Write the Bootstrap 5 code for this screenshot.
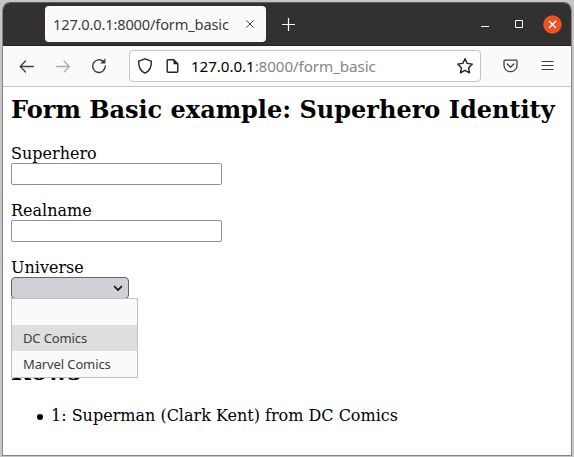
<!DOCTYPE html>
<html lang="en">
<head>
<meta charset="utf-8">
<meta name="viewport" content="width=device-width, initial-scale=1">
<title>Form Basic example</title>
<link href="https://cdn.jsdelivr.net/npm/bootstrap@5.3.0/dist/css/bootstrap.min.css" rel="stylesheet">
<style>
body { background: #c6c6c6; padding: 2px 2px 1px; height: 457px; overflow: hidden; }
.window { height: 454px; border: 1px solid #858585; border-top-color: #5d5b5c; border-radius: 8px 8px 0 0; background: #fff; font-family: "Noto Sans", sans-serif; overflow: hidden; }
.titlebar { height: 43px; background: #333031; border-bottom: 1px solid #222021; padding: 3px 9px 3px 42px; }
.tab-item { width: 221px; height: 36px; border-radius: 4px; background: #fafafa; color: #3d3d3d; padding: 0 12px 0 8px; font-size: 14.67px; }
.tab-label { letter-spacing: -.18px; }
.new-tab { margin-left: 16px; }
.win-min { margin-right: 24px; }
.win-max { margin-right: 19px; }
.toolbar { height: 41px; background: #fafafa; border-bottom: 1px solid #c5c5c5; padding: 0 17px 0 15px; }
.menu-icon { margin-left: 23px; }
.reload { margin-bottom: 2px; }
.address { width: 352px; height: 32px; margin-left: 22px; padding: 0 6px 0 7px; border: 1px solid #c3c3c3; border-radius: 4px; background: #fff; }
.page-icon { margin-left: 13px; }
.url { margin-left: 12px; font-size: 15.2px; letter-spacing: -.08px; color: #858585; }
.url span { color: #000; }
.page-body { padding: 9px 8px 0; font-family: "DejaVu Serif", serif; font-size: 16px; line-height: 19px; color: #000; }
.page-body h2 { font-size: 24px; line-height: 28px; font-weight: 700; white-space: nowrap; }
.page-body form { margin-top: 20px; height: 214px; }
.text-box { width: 211px; height: 22px; border: 1px solid #8f8f9d; border-radius: 2px; background: #fff; }
.field { margin-bottom: 16px; }
.choice { width: 118px; height: 22px; border: 1px solid #62626c; border-radius: 4px; background: #d0d0d7; padding: 0 5px 0 0; }
.options { top: 40px; left: 0; width: 127px; height: 80px; border: 1px solid #c0c0c0; background: #fafafa; font: 13px/26px "Noto Sans", sans-serif; letter-spacing: -.12px; color: #3d3d3d; }
.options div { height: 26px; padding-left: 11px; }
.options .current { background: #dedede; }
.hero-list { padding-left: 40px; margin-top: 20px; }
.hero-row::before { content: ""; width: 6px; height: 6px; border-radius: 50%; background: #000; margin: 2px 8px 0 -14px; }
</style>
</head>
<body>
<div class="window">
  <div class="titlebar d-flex align-items-start">
    <div class="tab-item d-flex align-items-center justify-content-between">
      <span class="tab-label text-nowrap">127.0.0.1:8000/form_basic</span>
      <svg width="8" height="8" viewBox="0 0 8 8" stroke="#444" fill="none"><path d="M.4 .4l7.200 7.200M7.600 .4L.4 7.600"/></svg>
    </div>
    <div class="d-flex align-items-center flex-grow-1 h-100">
      <svg class="new-tab" width="13" height="13" viewBox="0 0 13 13" stroke="#f8f8f8" stroke-width="1.2"><path d="M6.5 0v13M0 6.5h13"/></svg>
      <svg class="win-min ms-auto" width="10" height="10" viewBox="0 0 10 10"><path d="M1 7h8v1H1z" fill="#fff"/></svg>
      <svg class="win-max" width="10" height="10" viewBox="0 0 10 10"><path d="M1.500 1.500h7v7h-7z" fill="none" stroke="#fff"/></svg>
      <svg width="19" height="19" viewBox="0 0 19 19"><circle cx="9.5" cy="9.5" r="9.3" fill="#e95420"/><path d="M6 6l7 7M13 6l-7 7" stroke="#fff" stroke-width="1.4"/></svg>
    </div>
  </div>
  <div class="toolbar d-flex align-items-center">
    <svg width="18" height="16" viewBox="0 0 18 16" fill="none" stroke="#3d3d3d" stroke-width="1.3" stroke-linecap="round" stroke-linejoin="round"><path d="M15.300 8.500H2.500M7.500 3L2.200 8.500l5.300 5.500"/></svg>
    <svg class="ms-3 me-3" width="18" height="16" viewBox="0 0 18 16" fill="none" stroke="#adadad" stroke-width="1.3" stroke-linecap="round" stroke-linejoin="round"><path d="M4.500 8.500H17M12 3L17.300 8.500 12 14"/></svg>
    <svg class="ms-1 reload" width="17" height="17" viewBox="0 0 17 17"><path d="M13.300 4.500A6.300 6.300 0 1 0 15.300 9" fill="none" stroke="#3d3d3d" stroke-width="1.4" stroke-linecap="round"/><path d="M15.400 1.300v5.200h-5.200z" fill="#3d3d3d"/></svg>
    <div class="address d-flex align-items-center">
      <svg width="16" height="18" viewBox="0 0 16 18" fill="none" stroke="#222" stroke-width="1.4" stroke-linejoin="round"><path d="M8 1.800L14.300 4.200C14.700 9.500 12.500 13.800 8 16.200 3.500 13.800 1.300 9.500 1.700 4.200z"/></svg>
      <svg class="page-icon" width="13" height="16" viewBox="0 0 13 16"><path d="M2.200 1.700h5.500l4.100 4.200v7.400q0 1-1 1H2.200q-1 0-1-1V2.700q0-1 1-1z" fill="none" stroke="#222" stroke-width="1.400"/><path d="M7.500 1.500v4.800h4.800z" fill="#222"/></svg>
      <div class="url text-nowrap"><span>127.0.0.1</span>:8000/form_basic</div>
      <svg class="ms-auto" width="18" height="18" viewBox="0 0 18 18" fill="none" stroke="#222" stroke-width="1.400" stroke-linejoin="round"><path d="M9 1.700l2.200 4.700 5.100.7-3.700 3.600.9 5.100L9 13.400l-4.500 2.400.9-5.100L1.700 7.100l5.100-.7z"/></svg>
    </div>
    <svg class="ms-auto" width="15" height="14" viewBox="0 0 15 14" fill="none" stroke="#3d3d3d" stroke-width="1.300" stroke-linecap="round" stroke-linejoin="round"><path d="M2 1.200h11q1 0 1 1V6.500a6.500 6.200 0 0 1-13 0V2.200q0-1 1-1zM4.200 5l3.300 3.200L10.800 5"/></svg>
    <svg class="menu-icon" width="13" height="12" viewBox="0 0 13 12"><path d="M.5 1.500h12M.5 5.500h12M.5 9.500h12" stroke="#3d3d3d" stroke-width="1.200"/></svg>
  </div>
  <main class="page-body">
    <h2 class="m-0">Form Basic example: Superhero Identity</h2>
    <form>
      <div class="field"><label class="d-block" for="hero">Superhero</label><input id="hero" class="text-box d-block" type="text"></div>
      <div class="field"><label class="d-block" for="real">Realname</label><input id="real" class="text-box d-block" type="text"></div>
      <div class="position-relative">
        <div>Universe</div>
        <div class="choice d-flex align-items-center justify-content-end"><svg width="10" height="8" viewBox="0 0 10 8" fill="none" stroke="#111" stroke-width="1.700" stroke-linecap="round"><path d="M1.500 2.500L5 6 8.500 2.500"/></svg></div>
        <div class="options position-absolute"><div></div><div class="current">DC Comics</div><div>Marvel Comics</div></div>
      </div>
    </form>
    <h2 class="mb-0">Rows</h2>
    <ul class="hero-list list-unstyled mb-0"><li class="hero-row d-flex align-items-center">1: Superman (Clark Kent) from DC Comics</li></ul>
  </main>
</div>
<script src="https://cdn.jsdelivr.net/npm/bootstrap@5.3.0/dist/js/bootstrap.bundle.min.js"></script>
</body>
</html>
